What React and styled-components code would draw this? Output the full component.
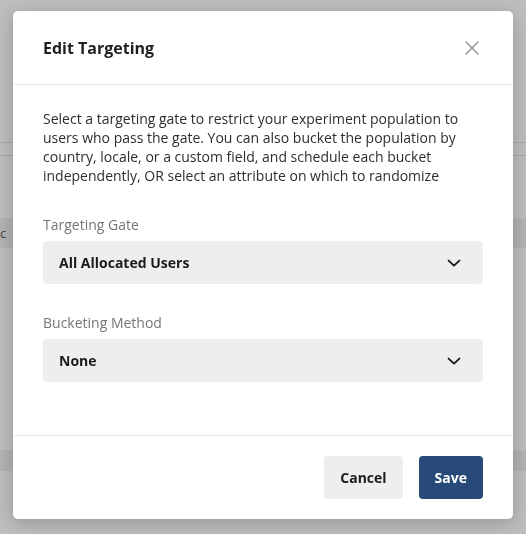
import React from 'react';
import styled, { createGlobalStyle } from 'styled-components';

const GlobalStyle = createGlobalStyle`
    html, body {
        margin: 0;
        padding: 0;
        background: #ffffff;
        font-family: "Open Sans", "Liberation Sans", sans-serif;
    }
    * {
        box-sizing: border-box;
    }
`;

// page underneath the dialog, only faint bands show through the backdrop
const Page = styled.div`
    display: flex;
    flex-direction: column;
    width: 526px;
    height: 534px;
    overflow: hidden;
`;

const PageBlock = styled.div`
    height: ${props => props.h}px;
    flex-shrink: 0;
    background: ${props => props.bg || '#ffffff'};
    border-bottom: ${props => props.line ? '1px solid #e2e2e2' : 'none'};
    display: flex;
    align-items: center;
    padding-left: ${props => props.indent || 0}px;
    font-size: 13px;
    color: #555;
`;

const Backdrop = styled.div`
    position: fixed;
    inset: 0;
    background: rgba(0, 0, 0, 0.26);
    padding: 11px 13px 0 13px;
    display: flex;
    align-items: flex-start;
`;

const Modal = styled.div`
    width: 500px;
    height: 508px;
    background: #ffffff;
    border-radius: 5px;
    box-shadow: 0 4px 18px rgba(0, 0, 0, 0.22);
    display: flex;
    flex-direction: column;
`;

const Header = styled.div`
    height: 74px;
    flex-shrink: 0;
    padding: 0 30px;
    display: flex;
    align-items: center;
    justify-content: space-between;
    border-bottom: 1px solid #e4e4e4;
`;

const Title = styled.h2`
    margin: 0;
    font-size: 16px;
    font-weight: 700;
    color: #1f1f1f;
`;

const CloseButton = styled.button`
    border: none;
    background: none;
    padding: 0;
    margin-right: 3px;
    width: 16px;
    height: 16px;
    display: flex;
    align-items: center;
    justify-content: center;
    cursor: pointer;
`;

const Body = styled.div`
    flex: 1;
    padding: 24px 30px;
`;

const Intro = styled.p`
    margin: 0 0 30px;
    font-size: 14px;
    line-height: 19px;
    color: #2e2e2e;
`;

const Field = styled.div`
    margin-bottom: 29px;
`;

const Label = styled.div`
    font-size: 14px;
    line-height: 19px;
    color: #767676;
    margin-bottom: 7px;
`;

const Select = styled.div`
    height: 43px;
    background: #eeeeee;
    border-radius: 4px;
    padding: 0 22px 0 16px;
    display: flex;
    align-items: center;
    justify-content: space-between;
    font-size: 14px;
    font-weight: 700;
    color: #1c1c1c;
    cursor: pointer;
`;

const Footer = styled.div`
    height: 84px;
    flex-shrink: 0;
    border-top: 1px solid #e4e4e4;
    padding: 20px 30px 0;
    display: flex;
    align-items: flex-start;
    justify-content: flex-end;
    gap: 16px;
`;

const Button = styled.button`
    height: 43px;
    padding: 0 16px;
    border: none;
    border-radius: 4px;
    font-family: inherit;
    font-size: 14px;
    font-weight: 700;
    background: ${props => props.primary ? '#274a78' : '#eeeeee'};
    color: ${props => props.primary ? '#ffffff' : '#1c1c1c'};
    cursor: pointer;
`;

function Chevron() {
    return (
        <svg width="14" height="14" viewBox="0 0 14 14" fill="none">
            <path d="M1.6 4.6 L7 9.6 L12.4 4.6" stroke="#1c1c1c" strokeWidth="1.9" strokeLinecap="round" strokeLinejoin="round" />
        </svg>
    );
}

function CloseIcon() {
    return (
        <svg width="14" height="14" viewBox="0 0 14 14" fill="none">
            <path d="M1 1 L13 13 M13 1 L1 13" stroke="#9a9a9a" strokeWidth="1.6" strokeLinecap="round" />
        </svg>
    );
}

function SelectField({ label, value }) {
    return (
        <Field>
            <Label>{label}</Label>
            <Select>
                <span>{value}</span>
                <Chevron />
            </Select>
        </Field>
    );
}

export default function App() {
    return (
        <>
            <GlobalStyle />
            <Page>
                <PageBlock h={143} line />
                <PageBlock h={13} line />
                <PageBlock h={62} />
                <PageBlock h={30} bg="#f0f0f0">c</PageBlock>
                <PageBlock h={202} />
                <PageBlock h={21} bg="#f0f0f0" />
                <PageBlock h={63} indent={60}>Allocated users with targeting</PageBlock>
            </Page>
            <Backdrop>
                <Modal>
                    <Header>
                        <Title>Edit Targeting</Title>
                        <CloseButton aria-label="Close">
                            <CloseIcon />
                        </CloseButton>
                    </Header>
                    <Body>
                        <Intro>
                            Select a targeting gate to restrict your experiment population to users who pass the gate. You can also bucket the population by country, locale, or a custom field, and schedule each bucket independently, OR select an attribute on which to randomize
                        </Intro>
                        <SelectField label="Targeting Gate" value="All Allocated Users" />
                        <SelectField label="Bucketing Method" value="None" />
                    </Body>
                    <Footer>
                        <Button>Cancel</Button>
                        <Button primary>Save</Button>
                    </Footer>
                </Modal>
            </Backdrop>
        </>
    );
}
